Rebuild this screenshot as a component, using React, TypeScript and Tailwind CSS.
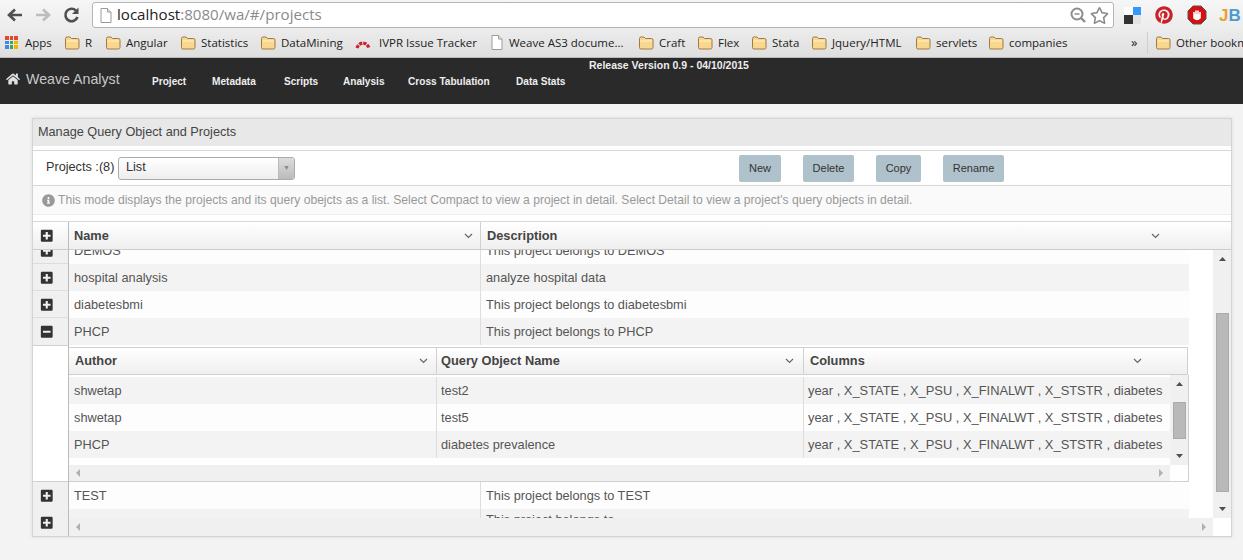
import { FaHome, FaInfoCircle, FaMinusSquare, FaPlusSquare, FaPinterest, FaRegStar } from 'react-icons/fa'

const SANS = "font-['Liberation_Sans',Arial,sans-serif]"
const UI = "font-['Open_Sans','Noto_Sans',sans-serif]"

const bookmarks = [
  { label: 'Apps', icon: 'apps', width: 'w-[59px]', gap: 'gap-[7px]' },
  { label: 'R', icon: 'folder', width: 'w-[41px]', gap: 'gap-[5px]' },
  { label: 'Angular', icon: 'folder', width: 'w-[75px]', gap: 'gap-[5px]' },
  { label: 'Statistics', icon: 'folder', width: 'w-[80px]', gap: 'gap-[5px]' },
  { label: 'DataMining', icon: 'folder', width: 'w-[95px]', gap: 'gap-[5px]' },
  { label: 'IVPR Issue Tracker', icon: 'arc', width: 'w-[136px]', gap: 'gap-[8px]' },
  { label: 'Weave AS3 docume...', icon: 'doc', width: 'w-[147px]', gap: 'gap-[6px]' },
  { label: 'Craft', icon: 'folder', width: 'w-[59px]', gap: 'gap-[5px]' },
  { label: 'Flex', icon: 'folder', width: 'w-[54px]', gap: 'gap-[5px]' },
  { label: 'Stata', icon: 'folder', width: 'w-[60px]', gap: 'gap-[5px]' },
  { label: 'Jquery/HTML', icon: 'folder', width: 'w-[104px]', gap: 'gap-[5px]' },
  { label: 'servlets', icon: 'folder', width: 'w-[73px]', gap: 'gap-[5px]' },
  { label: 'companies', icon: 'folder', width: 'w-[143px]', gap: 'gap-[5px]' },
]

const navItems = [
  { label: 'Project', width: 'w-[60px]' },
  { label: 'Metadata', width: 'w-[72px]' },
  { label: 'Scripts', width: 'w-[59px]' },
  { label: 'Analysis', width: 'w-[65px]' },
  { label: 'Cross Tabulation', width: 'w-[108px]' },
  { label: 'Data Stats', width: 'w-[70px]' },
]

const COLUMNS = 'year , X_STATE , X_PSU , X_FINALWT , X_STSTR , diabetes'

function Folder() {
  return (
    <svg width="16" height="14" viewBox="0 0 16 14" className="shrink-0">
      <path d="M1.5 2.5 Q1.5 1 3 1 H6 L7.5 2.5 H13.5 Q15 2.5 15 4 V11.5 Q15 13 13.5 13 H3 Q1.5 13 1.5 11.5 Z" fill="#f8d88f" stroke="#a07a45" />
      <path d="M2.5 5 H14" stroke="#fff2cf" />
    </svg>
  )
}

function Doc() {
  return (
    <svg width="12" height="15" viewBox="0 0 12 15" className="shrink-0">
      <path d="M1 .5 H7.5 L11 4 V14.5 H1 Z" fill="#fff" stroke="#9a9a9a" />
      <path d="M7.5 .5 V4 H11" fill="#e6e6e6" stroke="#9a9a9a" />
    </svg>
  )
}

function AppsIcon() {
  const colors = ['bg-[#e2492f]', 'bg-[#e2492f]', 'bg-[#e2492f]', 'bg-[#3d87f0]', 'bg-[#3aa757]', 'bg-[#f4b400]', 'bg-[#3d87f0]', 'bg-[#3aa757]', 'bg-[#f4b400]']
  return (
    <div className="grid w-[13px] shrink-0 grid-cols-3 gap-px">
      {colors.map((c, i) => (
        <span key={i} className={`h-[3.6px] w-[3.6px] ${c}`} />
      ))}
    </div>
  )
}

function ArcIcon() {
  return (
    <svg width="16" height="12" viewBox="0 0 16 12" className="shrink-0">
      <path d="M2 11 A6.5 8 0 0 1 14 11" fill="none" stroke="#c9202a" strokeWidth="3.2" strokeDasharray="3.2 1" />
    </svg>
  )
}

function BookmarkIcon({ kind }: { kind: string }) {
  if (kind === 'apps') return <AppsIcon />
  if (kind === 'arc') return <ArcIcon />
  if (kind === 'doc') return <Doc />
  return <Folder />
}

function ChromeBar() {
  return (
    <div className={`${UI} bg-[#f1f1f1]`}>
      <div className="flex h-[30px] items-center bg-gradient-to-b from-[#f6f6f6] to-[#ececec]">
        <div className="flex w-[92px] shrink-0 items-center pl-[6px]">
          <svg width="18" height="16" viewBox="0 0 18 16">
            <path d="M16 8 H4 M9 2.5 L3 8 L9 13.5" fill="none" stroke="#4f4f4f" strokeWidth="2.6" />
          </svg>
          <svg width="18" height="16" viewBox="0 0 18 16" className="ml-[11px]">
            <path d="M1 8 H13 M8 2.5 L14 8 L8 13.5" fill="none" stroke="#bdbdbd" strokeWidth="2.6" />
          </svg>
          <svg width="18" height="18" viewBox="0 0 18 18" className="ml-[10px]">
            <path d="M14.5 11 A6.2 6.2 0 1 1 13 4.6" fill="none" stroke="#4f4f4f" strokeWidth="2.6" />
            <path d="M15.5 1.5 V8 H9 Z" fill="#4f4f4f" />
          </svg>
        </div>
        <div className="flex h-[26px] w-[1022px] shrink-0 items-center rounded-[3px] border border-[#b5b5b5] bg-white pr-1 pl-[7px]">
          <Doc />
          <span className="ml-[5px] text-[15.1px] leading-none text-[#8a8a8a]">
            <span className="text-[#222]">localhost</span>:8080/wa/#/projects
          </span>
          <svg width="18" height="18" viewBox="0 0 18 18" className="mr-[3px] ml-auto">
            <circle cx="8" cy="8" r="5.5" fill="none" stroke="#8c8c8c" strokeWidth="2" />
            <path d="M5.5 8 H10.5" stroke="#8c8c8c" strokeWidth="1.5" />
            <path d="M12 12 L16 16" stroke="#8c8c8c" strokeWidth="2.4" />
          </svg>
          <FaRegStar className="text-[19px] text-[#8a8a8a]" />
        </div>
        <div className="flex flex-1 items-center overflow-hidden pl-[10px]">
          <div className="grid h-[17px] w-[17px] shrink-0 grid-cols-2 grid-rows-2">
            <span className="bg-white" />
            <span className="bg-[#3399ff]" />
            <span className="bg-[#333]" />
            <span className="bg-[#e4e4e4]" />
          </div>
          <FaPinterest className="ml-[14px] shrink-0 text-[18px] text-[#cb2027]" />
          <svg width="20" height="20" viewBox="0 0 20 20" className="ml-[14px] shrink-0">
            <path d="M6 1 H14 L19 6 V14 L14 19 H6 L1 14 V6 Z" fill="#d80f0f" stroke="#555" />
            <path d="M7 13 V7 M9 12 V5.5 M11 12 V5.5 M13 12 V7 M7 10 H13 V13 Q10 16 7 13 Z" stroke="#fff" strokeWidth="1.6" fill="#fff" />
          </svg>
          <span className={`${SANS} ml-[12px] shrink-0 text-[17px] leading-none font-bold`}>
            <span className="text-[#e8a02c]">J</span>
            <span className="text-[#4a9ccf]">B</span>
          </span>
        </div>
      </div>
      <div className="flex h-[28px] items-center overflow-hidden border-b border-[#b9b9b9] bg-gradient-to-b from-[#ececec] to-[#dedede] pb-[2px] pl-[5px] text-[11.5px] text-[#222]">
        {bookmarks.map((b) => (
          <div key={b.label} className={`flex shrink-0 items-center ${b.width} ${b.gap}`}>
            <BookmarkIcon kind={b.icon} />
            <span className="whitespace-nowrap">{b.label}</span>
          </div>
        ))}
        <span className="w-[16px] shrink-0 text-[13px] leading-none">»</span>
        <span className="mr-[7px] h-[22px] w-px shrink-0 bg-[#cfcfcf]" />
        <div className="flex shrink-0 items-center gap-[5px]">
          <Folder />
          <span className="whitespace-nowrap">Other bookmarks</span>
        </div>
      </div>
    </div>
  )
}

function NavBar() {
  return (
    <div className={`${SANS} flex h-[46px] bg-[#2a2a2a] text-white`}>
      <div className="flex w-[152px] shrink-0 items-start pt-[13px] pl-[6px]">
        <FaHome className="mt-[1px] text-[14px] text-[#e0e0e0]" />
        <span className="ml-[6px] text-[14.2px] leading-[17px] font-normal text-[#c8c8c8]">Weave Analyst</span>
      </div>
      <div className="relative flex flex-1 items-start pt-[17px] text-[10.1px] leading-[13px] font-bold text-[#eeeeee]">
        {navItems.map((n) => (
          <span key={n.label} className={`shrink-0 whitespace-nowrap ${n.width}`}>
            {n.label}
          </span>
        ))}
        <span className="absolute top-[1px] left-[437px] text-[10.5px] whitespace-nowrap">
          Release Version 0.9 - 04/10/2015
        </span>
      </div>
    </div>
  )
}

function ToolButton({ label, className }: { label: string; className: string }) {
  return (
    <button className={`flex h-[27px] items-center justify-center rounded-[2px] bg-[#afc1cb] text-[11px] text-[#333] ${className}`}>
      {label}
    </button>
  )
}

function Toolbar() {
  return (
    <div className="flex h-[35px] items-center border-b border-[#d8d8d8] bg-white pl-[13px] text-[#333]">
      <span className="w-[72px] shrink-0 text-[12.7px]">Projects :(8)</span>
      <div className="flex h-[23px] w-[177px] shrink-0 items-center justify-between overflow-hidden rounded-[3px] border border-[#aaa] bg-gradient-to-b from-white to-[#eeeeee]">
        <span className="pl-[7px] text-[12.7px]">List</span>
        <span className="flex h-full w-[16px] items-center justify-center border-l border-[#bbb] bg-gradient-to-b from-[#dddddd] to-[#bbbbbb] text-[7px] text-[#888]">▼</span>
      </div>
      <ToolButton label="New" className="ml-[444px] w-[42px]" />
      <ToolButton label="Delete" className="ml-[22px] w-[51px]" />
      <ToolButton label="Copy" className="ml-[22px] w-[45px]" />
      <ToolButton label="Rename" className="ml-[22px] w-[61px]" />
    </div>
  )
}

function Chevron() {
  return (
    <svg width="9" height="6" viewBox="0 0 9 6" className="shrink-0">
      <path d="M1 1 L4.5 4.5 L8 1" fill="none" stroke="#666" strokeWidth="1.2" />
    </svg>
  )
}

function Arrow({ dir }: { dir: 'up' | 'down' | 'left' | 'right' }) {
  const points = {
    up: '0,6 7,6 3.5,2',
    down: '0,2 7,2 3.5,6',
    left: '6,0 6,8 2,4',
    right: '2,0 2,8 6,4',
  }
  const color = dir === 'up' || dir === 'down' ? '#505050' : '#b0b0b0'
  return (
    <svg width="7" height="8" viewBox="0 0 7 8" className="shrink-0">
      <polygon points={points[dir]} fill={color} />
    </svg>
  )
}

function HScroll({ className }: { className: string }) {
  return (
    <div className={`flex shrink-0 items-center justify-between bg-[#f0f0f0] pr-[6px] pl-[5px] ${className}`}>
      <Arrow dir="left" />
      <Arrow dir="right" />
    </div>
  )
}

function HeadCell({ label, className, chevron }: { label: string; className: string; chevron: string }) {
  return (
    <div className={`flex shrink-0 items-center border-r border-[#d0d0d0] text-[12.8px] font-bold text-[#444] ${className}`}>
      <span>{label}</span>
      <span className={chevron}>
        <Chevron />
      </span>
    </div>
  )
}

function Row({ name, desc, shaded, descClass }: { name: string; desc: string; shaded?: boolean; descClass?: string }) {
  return (
    <div className={`flex h-[27px] w-[1120px] shrink-0 items-center text-[12.75px] text-[#555] ${shaded ? 'bg-[#f3f3f3]' : 'bg-[#fdfdfd]'}`}>
      <div className="flex h-full w-[412px] shrink-0 items-center border-r border-[#dddddd] pl-[5px]">{name}</div>
      <div className={`pl-[5px] ${descClass ?? ''}`}>{desc}</div>
    </div>
  )
}

function NestedRow({ author, query, shaded }: { author: string; query: string; shaded?: boolean }) {
  return (
    <div className={`flex h-[27px] shrink-0 items-center text-[12.75px] text-[#555] ${shaded ? 'bg-[#f3f3f3]' : 'bg-[#fdfdfd]'}`}>
      <div className="flex h-full w-[368px] shrink-0 items-center border-r border-[#dddddd] pl-[5px]">{author}</div>
      <div className="flex h-full w-[367px] shrink-0 items-center border-r border-[#dddddd] pl-[4px]">{query}</div>
      <div className="pl-[4px] text-[12.9px] whitespace-nowrap">{COLUMNS}</div>
    </div>
  )
}

function NestedGrid() {
  return (
    <div className="flex h-[137px] w-[1120px] shrink-0 flex-col border-b border-[#d0d0d0] bg-white pt-[2px]">
      <div className="flex h-[28px] w-[1119px] shrink-0 border-y border-r border-[#d0d0d0] bg-gradient-to-b from-[#ffffff] to-[#efefef]">
        <HeadCell label="Author" className="w-[368px] pl-[6px]" chevron="ml-[302px]" />
        <HeadCell label="Query Object Name" className="w-[367px] pl-[4px]" chevron="ml-[225px]" />
        <HeadCell label="Columns" className="flex-1 border-r-0 pl-[6px]" chevron="ml-[268px]" />
      </div>
      <div className="flex h-[90px] shrink-0 border-r border-[#d0d0d0]">
        <div className="flex w-[1101px] shrink-0 flex-col overflow-hidden pt-[2px]">
          <NestedRow author="shwetap" query="test2" shaded />
          <NestedRow author="shwetap" query="test5" />
          <NestedRow author="PHCP" query="diabetes prevalence" shaded />
        </div>
        <div className="flex flex-1 flex-col items-center justify-between bg-[#f0f0f0] py-[5px]">
          <Arrow dir="up" />
          <div className="h-[37px] w-[13px] shrink-0 border border-[#aaa] bg-[#b9b9b9]" />
          <Arrow dir="down" />
        </div>
      </div>
      <div className="flex flex-1 border-r border-[#d0d0d0]">
        <HScroll className="w-[1101px]" />
      </div>
    </div>
  )
}

function LeftCell({ minus, className }: { minus?: boolean; className: string }) {
  const Icon = minus ? FaMinusSquare : FaPlusSquare
  return (
    <div className={`flex shrink-0 items-start bg-[#f0f0f0] pt-[7px] pl-[7px] text-[13.5px] text-[#333] ${className}`}>
      <Icon />
    </div>
  )
}

function Grid() {
  return (
    <div className={`${SANS} border-t border-[#d8d8d8] bg-white`}>
      <div className="flex h-[28px] border-b border-[#cccccc] bg-gradient-to-b from-[#ffffff] to-[#efefef]">
        <div className="flex w-[36px] shrink-0 items-center border-r border-[#bbb] pl-[7px] text-[13.5px] text-[#333]">
          <FaPlusSquare />
        </div>
        <HeadCell label="Name" className="w-[412px] pl-[5px]" chevron="ml-[355px]" />
        <HeadCell label="Description" className="flex-1 border-r-0 pl-[6px]" chevron="ml-[594px]" />
      </div>
      <div className="flex h-[286px] overflow-hidden">
        <div className="flex w-[36px] shrink-0 flex-col overflow-hidden border-r border-[#bbb]">
          <LeftCell className="mt-[-13px] h-[27px] border-b border-[#dddddd]" />
          <LeftCell className="h-[27px] border-b border-[#dddddd]" />
          <LeftCell className="h-[27px] border-b border-[#dddddd]" />
          <LeftCell minus className="h-[27px]" />
          <div className="h-[137px] shrink-0 border-y border-[#d0d0d0] bg-white" />
          <LeftCell className="h-[27px]" />
          <LeftCell className="h-[27px]" />
        </div>
        <div className="flex min-w-0 flex-1 flex-col">
          <div className="flex h-[268px] shrink-0">
            <div className="flex w-[1144px] shrink-0 flex-col overflow-hidden">
              <div className="mt-[-13px] shrink-0">
                <Row name="DEMOS" desc="This project belongs to DEMOS" />
              </div>
              <Row name="hospital analysis" desc="analyze hospital data" shaded />
              <Row name="diabetesbmi" desc="This project belongs to diabetesbmi" />
              <Row name="PHCP" desc="This project belongs to PHCP" shaded />
              <NestedGrid />
              <Row name="TEST" desc="This project belongs to TEST" />
              <Row name="" desc="This project belongs to" shaded descClass="pb-[5px]" />
            </div>
            <div className="flex flex-1 flex-col items-center justify-between bg-[#f0f0f0] py-[5px]">
              <Arrow dir="up" />
              <div className="mt-[37px] h-[179px] w-[13px] shrink-0 border border-[#aaa] bg-[#b9b9b9]" />
              <Arrow dir="down" />
            </div>
          </div>
          <div className="flex flex-1">
            <HScroll className="w-[1144px]" />
            <div className="flex-1 bg-white" />
          </div>
        </div>
      </div>
    </div>
  )
}

export default function App() {
  return (
    <div className="h-[560px] w-[1243px] overflow-hidden bg-[#f3f3f3]">
      <ChromeBar />
      <NavBar />
      <div className="px-[32px] pt-[14px]">
        <div className={`${SANS} w-[1200px] border border-[#d4d4d4] bg-white shadow-[0_0_3px_rgba(0,0,0,0.12)]`}>
          <div className="flex h-[27px] items-center bg-[#e8e8e8] pl-[5px] text-[12.7px] text-[#444]">
            Manage Query Object and Projects
          </div>
          <div className="h-[5px] border-b border-[#d8d8d8] bg-white" />
          <Toolbar />
          <div className="flex h-[29px] items-center border-b border-[#eeeeee] bg-[#fafafa] pl-[9px] text-[12.11px] text-[#999]">
            <FaInfoCircle className="shrink-0 text-[13px] text-[#999]" />
            <span className="ml-[3px] whitespace-nowrap">
              This mode displays the projects and its query obejcts as a list. Select Compact to view a project in detail. Select Detail to view a project's query objects in detail.
            </span>
          </div>
          <div className="h-[6px] bg-white" />
          <Grid />
        </div>
      </div>
    </div>
  )
}
